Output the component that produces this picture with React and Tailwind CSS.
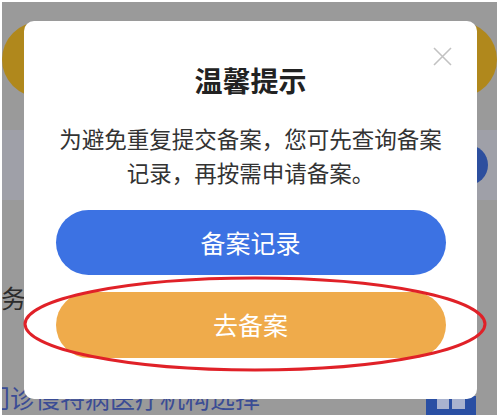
import React from "react";

const cjk = { fontFamily: '"Noto Sans CJK SC", "Noto Sans", sans-serif' };

export default function App() {
  return (
    <div className="w-[500px] h-[418px] bg-white pt-[2px] pl-[2px] pr-[3px] pb-[3px]" style={cjk}>
      <div className="relative w-full h-full bg-[#9a9a9a] overflow-hidden flex flex-col">
        {/* background page */}
        <div className="mt-[20px] h-[75px] rounded-full bg-[#b0881c] shrink-0" />
        <div className="mt-[33px] h-[70px] bg-[#9fa0a8] flex items-center shrink-0">
          <div className="ml-auto mr-[9px] w-[60px] h-[40px] rounded-full bg-[#2d4f9e]" />
        </div>
        <div className="mt-[80px] h-[34px] flex items-center shrink-0">
          <span className="text-[25px] leading-none text-[#2b2b2b] ml-[-1px]">务</span>
        </div>
        <div className="mt-[68px] flex items-start shrink-0">
          <span className="text-[25px] leading-[30px] text-[#3a4c95] ml-[-17px] whitespace-nowrap">门诊慢特病医疗机构选择</span>
          <div className="ml-auto mr-[21px] mt-[14px] w-[50px] h-[30px] bg-[#2a4fa3] flex items-start justify-center gap-[3px] pt-[3px]">
            <div className="w-[12px] h-[10px] bg-[#a9b3cf]" />
            <div className="w-[13px] h-[10px] bg-[#a9b3cf]" />
          </div>
        </div>

        {/* modal */}
        <div className="absolute left-[22px] top-[19px] w-[453px] h-[378px] bg-white rounded-[10px] flex flex-col items-center">
          <svg className="absolute left-[409px] top-[26px]" width="19" height="19" viewBox="0 0 19 19">
            <path d="M1 1 L18 18 M18 1 L1 18" stroke="#c2c2c2" strokeWidth="1.6" fill="none" />
          </svg>
          <div className="mt-[39px] text-[28px] leading-[40px] font-bold text-[#222222]">温馨提示</div>
          <div className="mt-[21px] text-[22.5px] leading-[34px] text-[#333333] text-center w-[400px]">
            <div>为避免重复提交备案，您可先查询备案</div>
            <div>记录，再按需申请备案。</div>
          </div>
          <div className="mt-[21px] w-[390px] h-[65px] rounded-full bg-[#3c72e3] flex items-center justify-center text-white text-[25px]">
            备案记录
          </div>
          <div className="mt-[17px] w-[390px] h-[66px] rounded-full bg-[#efab4b] flex items-center justify-center text-white text-[25px]">
            去备案
          </div>
        </div>

        {/* red annotation ellipse */}
        <svg className="absolute left-0 top-0 pointer-events-none" width="495" height="413" viewBox="2 2 495 413">
          <ellipse cx="255" cy="324" rx="230" ry="46" fill="none" stroke="#e02128" strokeWidth="3" />
        </svg>
      </div>
    </div>
  );
}
